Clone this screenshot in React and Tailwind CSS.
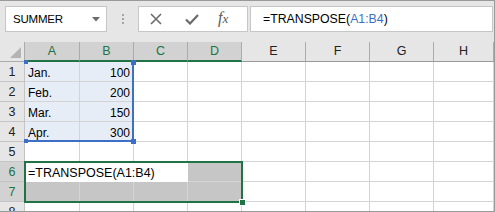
import React from "react";

const cols = [
  { name: "A", w: "w-[55px]", sel: true },
  { name: "B", w: "w-[54px]", sel: true },
  { name: "C", w: "w-[54px]", sel: true },
  { name: "D", w: "w-[54px]", sel: true },
  { name: "E", w: "w-[64px]" },
  { name: "F", w: "w-[64px]" },
  { name: "G", w: "w-[64px]" },
  { name: "H", w: "flex-1" },
];

const data = [
  ["Jan.", "100"],
  ["Feb.", "200"],
  ["Mar.", "150"],
  ["Apr.", "300"],
];

function RowHead({ n, sel }) {
  return (
    <div
      className={`w-[25px] shrink-0 h-full flex items-center justify-center border-r border-b border-[#c4c4c4] text-[12.5px] pt-[1px] ${
        sel ? "bg-[#d2d2d2] text-[#217346]" : "bg-[#e6e6e6] text-[#222]"
      }`}
    >
      {n}
    </div>
  );
}

function Cell({ w, children, className = "" }) {
  return (
    <div
      className={`${w} shrink-0 h-full border-r border-b border-[#d4d4d4] flex items-center px-[3px] pt-[2px] text-[12px] text-black ${className}`}
    >
      {children}
    </div>
  );
}

export default function App() {
  return (
    <div className="w-[495px] h-[212px] overflow-hidden bg-white border-t border-r border-b border-[#9a9a9a] font-['Liberation_Sans',Arial,sans-serif] flex flex-col">
      {/* formula bar */}
      <div className="h-[41px] shrink-0 bg-[#e6e6e6] flex items-start pt-[5px] pl-[5px]">
        <div className="w-[102px] h-[26px] bg-white border border-[#c6c6c6] flex items-center justify-between pl-[7px] pr-[6px]">
          <span className="text-[11.5px] text-black tracking-[-0.2px] pt-[1px]">SUMMER</span>
          <svg width="8" height="5" viewBox="0 0 8 5">
            <path d="M0 0 H8 L4 4.5 Z" fill="#6b6b6b" />
          </svg>
        </div>
        <div className="w-[31px] h-[26px] flex flex-col items-center justify-center gap-[2px]">
          <span className="w-[2px] h-[2px] bg-[#a6a6a6]" />
          <span className="w-[2px] h-[2px] bg-[#a6a6a6]" />
          <span className="w-[2px] h-[2px] bg-[#a6a6a6]" />
        </div>
        <div className="w-[110px] h-[26px] bg-white border border-[#c6c6c6] flex items-center">
          <svg className="ml-[11px]" width="12" height="12" viewBox="0 0 12 12">
            <path d="M1 1 L11 11 M11 1 L1 11" stroke="#6b6b6b" strokeWidth="1.6" />
          </svg>
          <svg className="ml-[23px]" width="14" height="11" viewBox="0 0 14 11">
            <path d="M1 5.5 L5 9.5 L13 1" stroke="#6b6b6b" strokeWidth="2.2" fill="none" />
          </svg>
          <span className="ml-[19px] text-[16px] text-[#595959] italic font-['Liberation_Serif',serif] leading-none pb-[2px]">
            f<span className="text-[13px]">x</span>
          </span>
        </div>
        <div className="flex-1 h-[26px] ml-[2px] mr-[1px] bg-white border border-[#c6c6c6] flex items-center pl-[12px] pt-[1px] text-[12.3px] text-black">
          =TRANSPOSE(<span className="text-[#3d6fc6]">A1:B4</span>)
        </div>
      </div>

      {/* column headers */}
      <div className="h-[20px] shrink-0 flex bg-[#e6e6e6]">
        <div className="w-[25px] shrink-0 h-full border-r border-b border-[#ababab] flex items-end justify-end pr-[3px] pb-[3px]">
          <svg width="11" height="11" viewBox="0 0 11 11">
            <path d="M11 0 V11 H0 Z" fill="#b4b4b4" />
          </svg>
        </div>
        {cols.map((c) => (
          <div
            key={c.name}
            className={`${c.w} shrink-0 h-full flex items-center justify-center text-[12.5px] border-r border-[#ababab] ${
              c.sel
                ? "bg-[#d2d2d2] text-[#217346] border-b-2 border-b-[#217346]"
                : "text-[#222] border-b border-b-[#9a9a9a]"
            }`}
          >
            {c.name}
          </div>
        ))}
      </div>

      {/* grid */}
      <div className="relative flex-1">
        {data.map((r, i) => (
          <div key={i} className="h-[20px] flex">
            <RowHead n={i + 1} />
            <Cell w={cols[0].w} className="bg-[#e7edf7]">{r[0]}</Cell>
            <Cell w={cols[1].w} className="bg-[#e7edf7] justify-end">{r[1]}</Cell>
            {cols.slice(2).map((c) => (
              <Cell key={c.name} w={c.w} />
            ))}
          </div>
        ))}

        <div className="h-[20px] flex">
          <RowHead n={5} />
          {cols.map((c) => (
            <Cell key={c.name} w={c.w} />
          ))}
        </div>

        <div className="h-[20px] flex">
          <RowHead n={6} sel />
          <div className="w-[163px] shrink-0 h-full bg-white flex items-center pl-[3px] pt-[2px] text-[12.5px] text-black">
            =TRANSPOSE(A1:B4)
          </div>
          <Cell w={cols[3].w} className="bg-[#c6c6c6] border-[#a6a6a6]" />
          {cols.slice(4).map((c) => (
            <Cell key={c.name} w={c.w} />
          ))}
        </div>

        <div className="h-[20px] flex">
          <RowHead n={7} sel />
          {cols.slice(0, 4).map((c) => (
            <Cell key={c.name} w={c.w} className="bg-[#c6c6c6] border-[#a6a6a6]" />
          ))}
          {cols.slice(4).map((c) => (
            <Cell key={c.name} w={c.w} />
          ))}
        </div>

        <div className="h-[20px] flex">
          <RowHead n={8} />
          {cols.map((c) => (
            <Cell key={c.name} w={c.w} />
          ))}
        </div>

        {/* reference range A1:B4 */}
        <div className="absolute left-[25px] top-0 w-[109px] h-[80px] border-r-2 border-b-2 border-[#3d6fc6] pointer-events-none" />
        <span className="absolute left-[24px] top-[-2px] w-[4px] h-[4px] bg-[#3d6fc6]" />
        <span className="absolute left-[131px] top-[-2px] w-[5px] h-[5px] bg-[#3d6fc6]" />
        <span className="absolute left-[24px] top-[77px] w-[4px] h-[4px] bg-[#3d6fc6]" />
        <span className="absolute left-[131px] top-[77px] w-[5px] h-[5px] bg-[#3d6fc6]" />

        {/* selection A6:D7 */}
        <div className="absolute left-[24px] top-[99px] w-[219px] h-[42px] border-2 border-[#217346] pointer-events-none" />
        <span className="absolute left-[239px] top-[137px] w-[7px] h-[7px] bg-[#217346] border border-white" />
      </div>
    </div>
  );
}
